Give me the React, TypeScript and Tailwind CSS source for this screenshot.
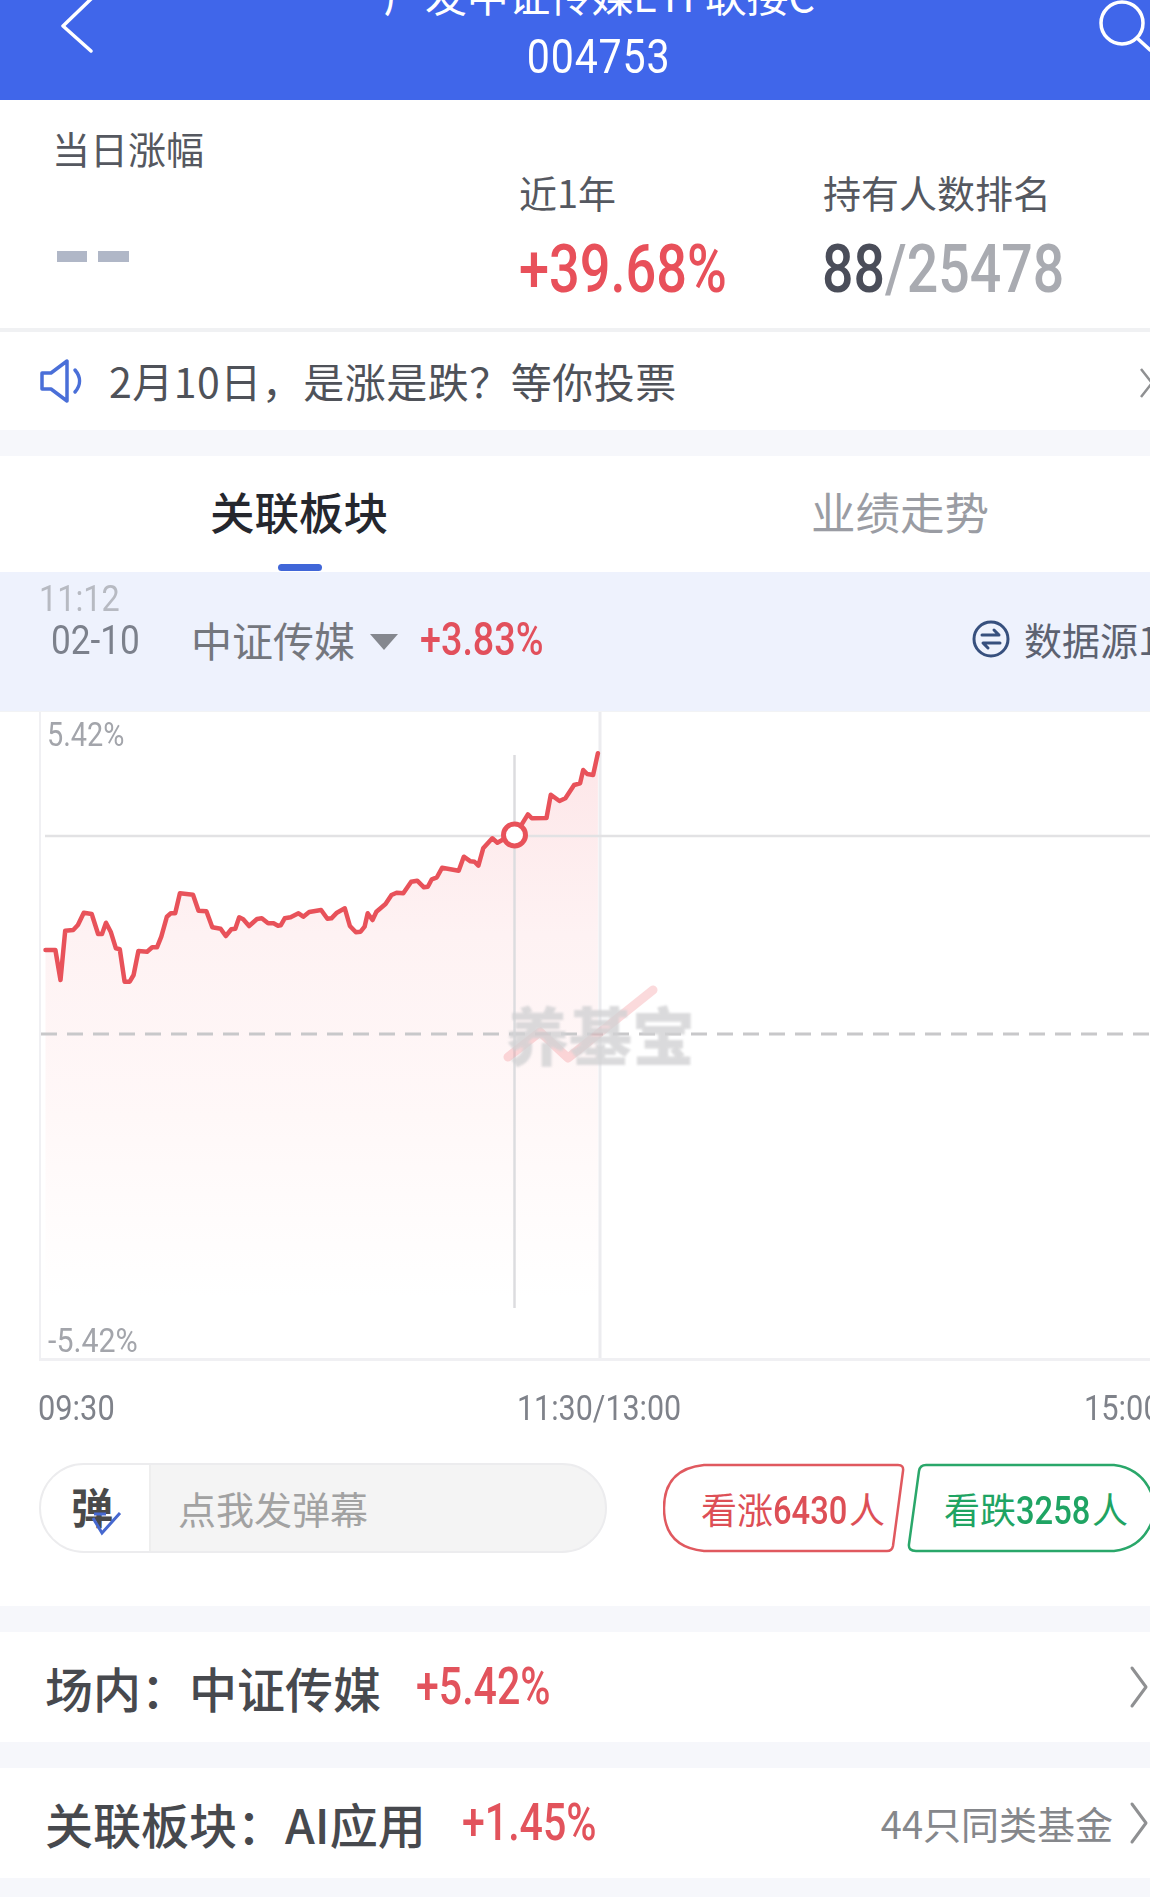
import React from "react";

const raw: [number, number][] = [[115,750],[140,750],[153,840],[165,692],[185,690],[197,675],[212,638],[232,642],[248,702],[258,702],[268,668],[280,695],[293,745],[303,748],[315,845],[328,845],[338,825],[350,753],[372,755],[385,742],[397,742],[408,710],[422,650],[432,640],[443,640],[455,580],[488,584],[502,632],[522,634],[537,682],[558,686],[571,708],[585,688],[595,686],[605,652],[615,658],[630,678],[650,657],[662,655],[678,670],[692,670],[703,677],[710,676],[720,655],[735,652],[755,640],[767,650],[782,636],[812,630],[828,656],[838,655],[852,638],[872,625],[885,678],[900,697],[912,695],[922,680],[930,640],[942,660],[952,635],[975,612],[990,585],[1003,578],[1020,580],[1040,545],[1055,542],[1072,562],[1082,560],[1092,538],[1105,532],[1118,503],[1160,512],[1173,470],[1190,484],[1200,485],[1210,497],[1222,445],[1245,415],[1258,428],[1270,420],[1302,407],[1335,343],[1345,355],[1382,354],[1393,284],[1415,303],[1430,295],[1452,255],[1467,250],[1475,210],[1485,222],[1500,225],[1512,160]];
// chart drawing origin in page: x=41, y=712
const pts = raw.map(([x, y]) => [x / 2.529 - 41, y / 3 + 700 - 712] as const);
const line = pts.map(([x, y]) => `${x.toFixed(1)},${y.toFixed(1)}`).join(" ");
const area = `${pts[0][0].toFixed(1)},645 ${line} ${pts[pts.length - 1][0].toFixed(1)},645`;

const cjk = { fontFamily: '"Noto Sans CJK SC","Noto Sans",sans-serif' };

function Num({ children, className = "" }: { children: React.ReactNode; className?: string }) {
  return <span className={`inline-block origin-left whitespace-nowrap font-['Roboto',sans-serif] ${className}`}>{children}</span>;
}

function Chevron({ className = "" }: { className?: string }) {
  return (
    <svg width="20" height="44" viewBox="0 0 20 44" className={className}>
      <path d="M3 3 L17 22 L3 41" fill="none" stroke="#8f9092" strokeWidth="3" strokeLinecap="round" strokeLinejoin="round" />
    </svg>
  );
}

export default function App() {
  return (
    <div className="w-[1150px] h-[1897px] overflow-hidden bg-white" style={cjk}>
      {/* Header */}
      <header className="h-[100px] bg-[#4066ea] flex overflow-hidden text-white">
        <div className="w-[350px] pl-[60px]">
          <svg width="36" height="56" viewBox="0 0 36 56" className="-mt-[1px]">
            <path d="M31 0 L3 27 L31 52" fill="none" stroke="#fff" strokeWidth="3.5" strokeLinecap="round" strokeLinejoin="round" />
          </svg>
        </div>
        <div className="w-[498px] flex flex-col items-center">
          <div className="text-[42px] leading-[44px] -mt-[28px] whitespace-nowrap tracking-[-0.4px]">广发中证传媒ETF联接C</div>
          <div className="text-[49px] leading-[50px] mt-[16px] font-['Roboto',sans-serif] origin-center scale-x-[0.84] tracking-[1px]">004753</div>
        </div>
        <div className="flex-1 flex justify-end">
          <svg width="52" height="54" viewBox="0 0 52 54">
            <circle cx="24" cy="23" r="21" fill="none" stroke="#fff" strokeWidth="3.5" />
            <path d="M39 38 L52 50" stroke="#fff" strokeWidth="3.5" strokeLinecap="round" />
          </svg>
        </div>
      </header>

      {/* Stats */}
      <section className="h-[228px] flex pl-[52px] text-[#555860]">
        <div className="w-[467px] pt-[23px]">
          <div className="text-[38px] leading-[50px] whitespace-nowrap">当日涨幅</div>
          <div className="flex gap-[11px] mt-[78px] ml-[5px]">
            <span className="w-[30px] h-[11px] bg-[#b0b7c7]" />
            <span className="w-[31px] h-[11px] bg-[#b0b7c7]" />
          </div>
        </div>
        <div className="w-[304px] pt-[67px]">
          <div className="text-[38px] leading-[50px] whitespace-nowrap">近1年</div>
          <Num className="text-[66px] leading-[76px] mt-[15px] font-medium text-[#e8505a] scale-x-[0.82]">+39.68%</Num>
        </div>
        <div className="pt-[67px]">
          <div className="text-[38px] leading-[50px] whitespace-nowrap">持有人数排名</div>
          <Num className="text-[66px] leading-[76px] mt-[15px] font-medium text-[#a9abb1] scale-x-[0.84] -ml-[1px]"><span className="text-[#4a4d59]">88</span>/25478</Num>
        </div>
      </section>
      <div className="h-[4px] bg-[#f0f1f3]" />

      {/* Notice */}
      <section className="h-[98px] flex items-center pl-[40px] justify-between">
        <div className="flex items-center gap-[25px]">
          <svg width="44" height="46" viewBox="0 0 44 46" fill="none" stroke="#4a6fd8" strokeWidth="3.5" strokeLinejoin="round" strokeLinecap="round">
            <path d="M2 15 H11 L27 3 V43 L11 31 H2 Z" />
            <path d="M35 12 C41 19 41 27 35 34" />
          </svg>
          <div className="text-[41px] leading-none text-[#4f5259] whitespace-nowrap tracking-[0.5px] -mt-[2px]">2月10日，是涨是跌？等你投票</div>
        </div>
        <svg width="10" height="36" viewBox="0 0 10 36" className="mt-[4px]">
          <path d="M1 4 L12 18 L1 32" fill="none" stroke="#8f9092" strokeWidth="2.5" />
        </svg>
      </section>
      <div className="h-[26px] bg-[#f6f7fb]" />

      {/* Tabs */}
      <section className="h-[116px] flex">
        <div className="w-[600px] pt-[30px]">
          <div className="ml-[210px] text-[44.5px] leading-[50px] font-medium text-[#25272e] whitespace-nowrap">关联板块</div>
          <div className="w-[44px] h-[7px] rounded-full bg-[#4066d8] ml-[278px] mt-[28px]" />
        </div>
        <div className="pt-[30px] pl-[211px] text-[44.5px] leading-[50px] text-[#9a9ca3] whitespace-nowrap">业绩走势</div>
      </section>

      {/* Band */}
      <section className="h-[139px] bg-[#eef2fd]">
        <div className="pl-[39px] pt-[7px] h-[40px]">
          <Num className="text-[36px] leading-[40px] text-[#b7bac2] scale-x-[0.9]">11:12</Num>
        </div>
        <div className="flex items-center pl-[51px] h-[50px] mt-[2px]">
          <Num className="text-[40px] leading-[50px] w-[140px] shrink-0 text-[#7c818c] scale-x-[0.88] mt-[4px]">02-10</Num>
          <div className="text-[41px] leading-[50px] text-[#74777e] whitespace-nowrap">中证传媒</div>
          <svg width="28" height="16" viewBox="0 0 28 16" className="ml-[15px] mt-[6px]"><path d="M0 0 H28 L14 16 Z" fill="#85888f" /></svg>
          <Num className="text-[46px] leading-[50px] ml-[22px] font-medium text-[#e2505c] scale-x-[0.82]">+3.83%</Num>
          <div className="ml-auto flex items-center">
            <svg width="38" height="38" viewBox="0 0 38 38" fill="none" stroke="#37507e" strokeWidth="3" strokeLinecap="round" strokeLinejoin="round">
              <circle cx="19" cy="19" r="17" />
              <path d="M10 15 H27 L22 10" />
              <path d="M28 23 H11 L16 28" />
            </svg>
            <div className="w-[126px] ml-[14px] text-[38px] leading-[50px] text-[#5d6271] whitespace-nowrap overflow-hidden">数据源1</div>
          </div>
        </div>
      </section>
      <div className="h-px bg-[#f2f3f5]" />

      {/* Chart */}
      <section className="h-[649px] ml-[39px] relative border-l-2 border-b-[3px] border-[#f0f0f3] overflow-hidden">
        <svg width="1111" height="646" viewBox="0 0 1111 646" className="block">
          <defs>
            <linearGradient id="fade" x1="0" y1="0" x2="0" y2="1">
              <stop offset="0" stopColor="#fde6e8" />
              <stop offset="0.3" stopColor="#fef2f3" />
              <stop offset="0.6" stopColor="#fff8f8" />
              <stop offset="0.9" stopColor="#ffffff" />
            </linearGradient>
          </defs>
          <polygon points={area} fill="url(#fade)" />
          <line x1="559" y1="0" x2="559" y2="646" stroke="#ececef" strokeWidth="3" />
          <line x1="4" y1="124" x2="1111" y2="124" stroke="#e2e2e4" strokeWidth="2.5" />
          <line x1="0" y1="322" x2="1111" y2="322" stroke="#c8c8ca" strokeWidth="3" strokeDasharray="16 10" />
          <line x1="473.5" y1="43" x2="473.5" y2="596" stroke="#dcdcdf" strokeWidth="2.5" />
          <polyline points={line} fill="none" stroke="#e8525a" strokeWidth="4.5" strokeLinejoin="round" strokeLinecap="round" />
          <circle cx="473.5" cy="123" r="11" fill="#fff" stroke="#e8525a" strokeWidth="5" />
          <path d="M467 345 L499 320 L527 346 L612 278" fill="none" stroke="#f2848c" strokeOpacity="0.3" strokeWidth="9" strokeLinecap="round" strokeLinejoin="round" />
        </svg>
        <Num className="absolute left-[6px] top-[4px] text-[34px] leading-[36px] text-[#a3a5ab] scale-x-[0.85]">5.42%</Num>
        <Num className="absolute left-[7px] bottom-[-1px] text-[33px] leading-[36px] text-[#a3a5ab] scale-x-[0.92]">-5.42%</Num>
        <div className="absolute left-[465px] top-[281px] text-[63px] leading-[80px] font-black text-[#d2d2d4] opacity-80 whitespace-nowrap blur-[1px]">养基宝</div>
      </section>

      {/* Time axis */}
      <section className="h-[102px] pl-[38px] pt-[30px] flex text-[#7f828a]">
        <div className="w-[479px] shrink-0"><Num className="text-[35px] leading-[36px] scale-x-[0.88]">09:30</Num></div>
        <div className="w-[567px] shrink-0"><Num className="text-[35px] leading-[36px] scale-x-[0.87]">11:30/13:00</Num></div>
        <div className="whitespace-nowrap shrink-0"><Num className="text-[35px] leading-[36px] scale-x-[0.88]">15:00</Num></div>
      </section>

      {/* Danmu + vote */}
      <section className="h-[143px] flex pl-[39px]">
        <div className="w-[568px] h-[90px] rounded-full border-2 border-[#ececee] bg-[#f4f4f4] overflow-hidden flex items-center">
          <div className="w-[110px] h-full bg-white border-r-2 border-[#eeeeee] relative flex items-center justify-center">
            <span className="text-[42px] leading-none font-bold text-[#4a4a4a] -mt-[4px] ml-[-6px]">弹</span>
            <svg width="36" height="26" viewBox="0 0 36 26" className="absolute left-[46px] top-[46px]">
              <path d="M6 7 L15 22 L33 2 M7 3 H19" fill="none" stroke="#4668cf" strokeWidth="3" />
            </svg>
          </div>
          <div className="pl-[27px] text-[38px] leading-none text-[#a2a2a2] whitespace-nowrap">点我发弹幕</div>
        </div>
        <div className="ml-[56px] relative w-[487px] h-[90px]">
          <svg width="487" height="90" viewBox="0 0 487 90" className="absolute inset-0">
            <path d="M41 2 H235 Q241 2 240 8 L230 83 Q229 88 224 88 H41 Q1 84 1 45 Q1 6 41 2 Z" fill="#fff" stroke="#e0595f" strokeWidth="2.5" />
            <path d="M263 2 H451 Q485 6 493 45 Q485 84 451 88 H253 Q245 88 246 81 L256 8 Q257 2 263 2 Z" fill="#fff" stroke="#2aa76a" strokeWidth="2.5" />
          </svg>
          <div className="relative flex h-full items-center pt-[4px]">
            <div className="w-[245px] pl-[38px] text-[36px] leading-none text-[#dd4f56] whitespace-nowrap">看涨<Num className="text-[38px] w-[76px] font-medium scale-x-[0.86]">6430</Num>人</div>
            <div className="pl-[36px] text-[36px] leading-none text-[#1fa463] whitespace-nowrap">看跌<Num className="text-[38px] w-[76px] font-medium scale-x-[0.86]">3258</Num>人</div>
          </div>
        </div>
      </section>

      <div className="h-[26px] bg-[#f6f7fb]" />
      <section className="h-[110px] flex items-center pl-[45px] justify-between">
        <div className="flex items-center">
          <div className="text-[48px] leading-none font-medium text-[#47494e] whitespace-nowrap">场内：中证传媒</div>
          <Num className="ml-[35px] text-[52px] leading-none font-medium text-[#e2535c] scale-x-[0.79]">+5.42%</Num>
        </div>
        <Chevron className="mr-[1px]" />
      </section>
      <div className="h-[26px] bg-[#f6f7fb]" />
      <section className="h-[110px] flex items-center pl-[45px] justify-between">
        <div className="flex items-center">
          <div className="text-[48px] leading-none font-medium text-[#47494e] whitespace-nowrap">关联板块：AI应用</div>
          <Num className="ml-[36px] text-[52px] leading-none font-medium text-[#e2535c] scale-x-[0.79]">+1.45%</Num>
        </div>
        <div className="flex items-center gap-[16px] pr-[1px]">
          <div className="text-[38px] leading-none text-[#85878b] whitespace-nowrap">44只同类基金</div>
          <Chevron />
        </div>
      </section>
      <div className="h-[19px] bg-[#f6f7fb]" />
    </div>
  );
}
